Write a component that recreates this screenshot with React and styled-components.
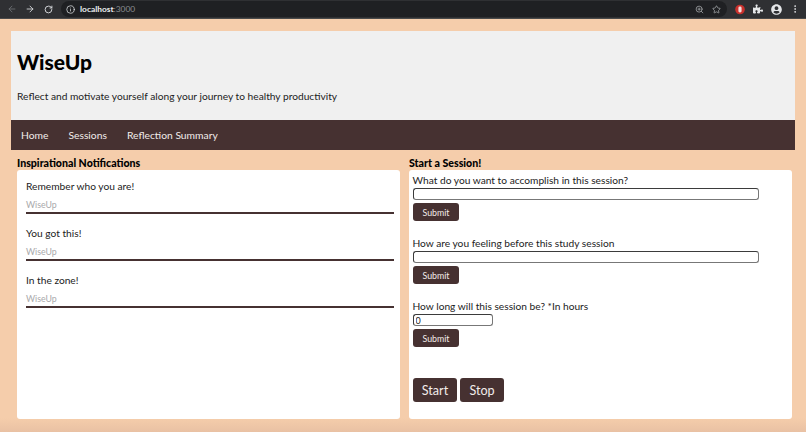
import styled, { createGlobalStyle } from 'styled-components'
import { ArrowLeft, ArrowRight, RotateCw, Info, ZoomIn, Star, EllipsisVertical } from 'lucide-react'
import { FaPuzzlePiece, FaUserCircle } from 'react-icons/fa'

const GlobalStyle = createGlobalStyle`
  html, body, #root {
    margin: 0;
    padding: 0;
    height: 100%;
    overflow: hidden;
    background: #f5cdab;
    font-family: 'Lato', 'Open Sans', sans-serif;
  }
`

const Page = styled.div`
  width: 806px;
  height: 432px;
  display: flex;
  flex-direction: column;
  background: linear-gradient(180deg, #f5cdab 0, #f5cdab 418px, #e9c1a4 432px);
  overflow: hidden;
`

const BrowserBar = styled.div`
  height: 19px;
  flex: none;
  display: flex;
  align-items: center;
  padding-left: 3px;
  background: #2f3033;
  border-bottom: 1px solid #4a4a4a;
  box-sizing: border-box;
  color: #d8dadd;
`

const NavIcon = styled.span`
  width: 18px;
  display: flex;
  align-items: center;
  justify-content: center;
  color: ${(p) => (p.$dim ? '#6f7276' : '#dfe1e4')};
`

const UrlPill = styled.div`
  margin-left: 4px;
  width: 666px;
  height: 16px;
  flex: none;
  display: flex;
  align-items: center;
  padding: 0 6px 0 5px;
  box-sizing: border-box;
  border-radius: 8px;
  background: #1f2023;
  font-size: 8.4px;
  color: #8b8e92;
`

const Host = styled.span`
  margin-left: 5px;
  color: #eceef0;
  font-weight: 700;
`

const PillIcons = styled.div`
  margin-left: auto;
  display: flex;
  align-items: center;
  gap: 8px;
  color: #a9acaf;
`

const Extensions = styled.div`
  margin-left: 8px;
  display: flex;
  align-items: center;
  gap: 8px;
  color: #e4e6e8;
`

const Header = styled.header`
  margin: 12px 11px 0;
  height: 89px;
  flex: none;
  background: #f0f0f0;
  padding-left: 6px;
  box-sizing: border-box;
  overflow: hidden;
`

const Title = styled.h1`
  margin: 18px 0 0;
  font-size: 21px;
  line-height: 25px;
  font-weight: 900;
  color: #000;
`

const Tagline = styled.p`
  margin: 16px 0 0;
  font-size: 10.2px;
  line-height: 13px;
  color: #222;
`

const NavBar = styled.nav`
  margin: 0 11px;
  height: 30px;
  flex: none;
  display: flex;
  align-items: center;
  gap: 20px;
  padding: 0 0 1px 10px;
  box-sizing: border-box;
  background: #463131;
`

const NavLink = styled.a`
  font-size: 10.3px;
  color: #f2ecea;
`

const Columns = styled.main`
  flex: 1;
  display: grid;
  grid-template-columns: 383px 383px;
  column-gap: 9px;
  padding: 7px 0 13px 17px;
  min-height: 0;
`

const Column = styled.section`
  display: flex;
  flex-direction: column;
  min-height: 0;
`

const ColumnTitle = styled.h2`
  margin: 0;
  height: 13px;
  font-size: 10.6px;
  line-height: 13px;
  font-weight: 900;
  color: #000;
`

const Card = styled.div`
  flex: 1;
  background: #fff;
  border-radius: 3px;
  box-sizing: border-box;
  padding: ${(p) => p.$padding};
`

const Notification = styled.div`
  height: 47px;
  box-sizing: border-box;
`

const NotificationText = styled.div`
  font-size: 10.2px;
  line-height: 13px;
  color: #222;
`

const NotificationSource = styled.div`
  margin-top: 6px;
  font-size: 8.8px;
  line-height: 12px;
  color: #a9a9ab;
`

const Rule = styled.div`
  margin-top: 1px;
  height: 2px;
  background: #463131;
`

const Question = styled.div`
  height: ${(p) => p.$height}px;
`

const Label = styled.label`
  display: block;
  font-size: 10.2px;
  line-height: 13px;
  color: #222;
`

const TextBox = styled.input`
  display: block;
  margin-top: 1px;
  width: ${(p) => p.$width}px;
  height: 12px;
  padding: 0 2px;
  box-sizing: border-box;
  border: 1px solid #3b3b3b;
  border-bottom-color: #777;
  border-right-color: #777;
  border-radius: 3px;
  background: #fff;
  font-family: inherit;
  font-size: 9px;
  color: #222;
  outline: none;
`

const Button = styled.button`
  display: block;
  padding: 0;
  border: 0;
  border-radius: 3px;
  background: #463131;
  color: #f2ecea;
  font-family: inherit;
`

const SubmitButton = styled(Button)`
  margin: 3px 0 0 0.5px;
  width: 46px;
  height: 18px;
  font-size: 8.8px;
`

const ActionRow = styled.div`
  display: flex;
  gap: 3px;
  margin: 31px 0 0 0.5px;
`

const ActionButton = styled(Button)`
  width: ${(p) => p.$width}px;
  height: 24px;
  font-size: 12.6px;
`

const notes = ['Remember who you are!', 'You got this!', 'In the zone!']
const questions = [
  { label: 'What do you want to accomplish in this session?', width: 346, height: 63 },
  { label: 'How are you feeling before this study session', width: 346, height: 63 },
  { label: 'How long will this session be? *In hours', width: 80, height: 47, value: '0' },
]

const App = () => (
  <>
    <GlobalStyle />
    <Page>
      <BrowserBar>
        <NavIcon $dim><ArrowLeft size={10} /></NavIcon>
        <NavIcon><ArrowRight size={10} /></NavIcon>
        <NavIcon><RotateCw size={9} strokeWidth={2.4} /></NavIcon>
        <UrlPill>
          <Info size={9} color="#dfe1e4" />
          <Host>localhost</Host>:3000
          <PillIcons>
            <ZoomIn size={9} />
            <Star size={9} />
          </PillIcons>
        </UrlPill>
        <Extensions>
          <svg width="10" height="11" viewBox="0 0 10 11">
            <circle cx="5" cy="5.5" r="4.8" fill="#c9302c" />
            <rect x="3.4" y="2.6" width="3.2" height="5.8" rx="1.4" fill="#f4dcdc" />
          </svg>
          <FaPuzzlePiece size={10} />
          <FaUserCircle size={11} />
          <EllipsisVertical size={10} />
        </Extensions>
      </BrowserBar>

      <Header>
        <Title>WiseUp</Title>
        <Tagline>Reflect and motivate yourself along your journey to healthy productivity</Tagline>
      </Header>

      <NavBar>
        <NavLink>Home</NavLink>
        <NavLink>Sessions</NavLink>
        <NavLink>Reflection Summary</NavLink>
      </NavBar>

      <Columns>
        <Column>
          <ColumnTitle>Inspirational Notifications</ColumnTitle>
          <Card $padding="10px 6px 0 9px">
            {notes.map((note) => (
              <Notification key={note}>
                <NotificationText>{note}</NotificationText>
                <NotificationSource>WiseUp</NotificationSource>
                <Rule />
              </Notification>
            ))}
          </Card>
        </Column>
        <Column>
          <ColumnTitle>Start a Session!</ColumnTitle>
          <Card $padding="4px 0 0 3.5px">
            {questions.map((q) => (
              <Question key={q.label} $height={q.height}>
                <Label>{q.label}</Label>
                <TextBox $width={q.width} defaultValue={q.value} />
                <SubmitButton>Submit</SubmitButton>
              </Question>
            ))}
            <ActionRow>
              <ActionButton $width={44}>Start</ActionButton>
              <ActionButton $width={44}>Stop</ActionButton>
            </ActionRow>
          </Card>
        </Column>
      </Columns>
    </Page>
  </>
)

export default App
